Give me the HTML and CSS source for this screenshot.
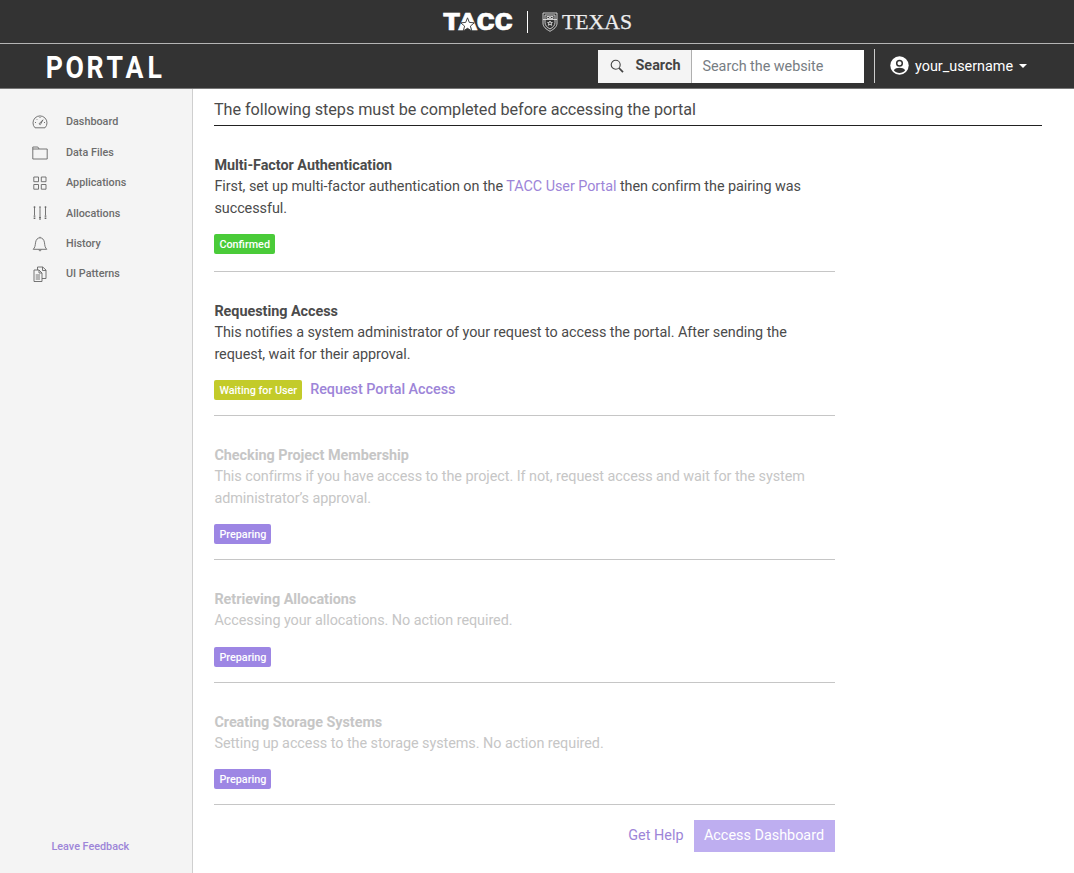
FILE: index.html
```html
<!DOCTYPE html>
<html lang="en">
<head>
<meta charset="utf-8">
<title>Portal</title>
<link rel="stylesheet" href="styles.css">
</head>
<body>
<header class="branding">
  <svg class="tacc" width="70" height="20" viewBox="0 0 70 20"><text x="0" y="18" textLength="69.500" lengthAdjust="spacingAndGlyphs">TACC</text><path class="star-edge" d="M24.500 5.800l1.800 4.600 5 .4-3.900 3.300 1.300 4.800-4.200-2.600-4.200 2.600 1.300-4.800-3.900-3.300 5-.4z"/></svg>
  <span class="divider"></span>
  <svg class="shield" width="16" height="20" viewBox="0 0 16 20"><path d="M1 1h14v10c0 4-3 6-7 8.3C4 17 1 15 1 11z"/><path d="M3 3h10v7.500c0 3.200-2 4.700-5 6.500-3-1.800-5-3.300-5-6.500zM1 7.500h14M5 4.500h2.500v2H5zM8.500 4.500H11v2H8.500zM8 9l.7 1.600h1.700l-1.300 1 .5 1.700L8 12.300l-1.600 1 .5-1.700-1.300-1h1.700z"/></svg>
  <svg class="texas" width="70" height="20" viewBox="0 0 70 20"><text x="0" y="17" textLength="70" lengthAdjust="spacingAndGlyphs">TEXAS</text></svg>
</header>
<nav class="topbar">
  <svg class="logo" width="120" height="30" viewBox="0 0 120 30"><text transform="scale(.86 1)" x="10.900 34.500 58.200 81 104 127.500" y="26.700">PORTAL</text></svg>
  <div class="search">
    <button class="search-button"><svg width="15" height="15" viewBox="0 0 15 15"><circle cx="5.700" cy="5.700" r="4.500"/><path d="M9 9l4 4.200" stroke-width="1.800"/></svg>Search</button>
    <div class="search-field">Search the website</div>
  </div>
  <div class="account">
    <svg width="19" height="19" viewBox="0 0 19 19"><circle cx="9.500" cy="9.500" r="9.200" fill="#fff"/><circle cx="9.500" cy="7.200" r="2.800" fill="#fff" stroke="#333" stroke-width="1.500"/><path d="M3.800 14.200c1.300-1.800 3.400-2.500 5.700-2.500s4.400.7 5.700 2.500c-1.400 1.700-3.500 2.700-5.700 2.700s-4.300-1-5.700-2.700z" fill="#333"/></svg>
    <span>your_username</span><i class="caret"></i>
  </div>
</nav>
<div class="page">
  <aside class="sidebar">
    <ul class="menu">
      <li><svg viewBox="0 0 16 16"><path d="M3 13.800A7 7 0 1 1 13 13.800zM7 9.800l4-4-2.700 4.800zM8 3v1M3 8.500h1M12 8.500h1M4.500 5l.7.7"/></svg>Dashboard</li>
      <li><svg viewBox="0 0 16 16"><path d="M.8 14V2h5l1.300 2h8.100v10zM.8 4h6.300"/></svg>Data Files</li>
      <li><svg viewBox="0 0 16 16"><path d="M1.800 2h4.700v4.700H1.800zM9.300 2H14v4.700H9.300zM1.800 9.500h4.700v4.700H1.800zM9.300 9.500H14v4.700H9.300z"/></svg>Applications</li>
      <li><svg viewBox="0 0 16 16"><path d="M2.500 1.500v9M8 5v9.500M13.500 1.500v9"/><path d="M2.500 1.500v1.500M8 12v2.500M13.500 1.500v1.500M2.500 10.500v4M13.500 10.500v4M8 1.500v3" stroke-width="1.700" stroke-dasharray="1.300 .8"/></svg>Allocations</li>
      <li><svg viewBox="0 0 16 16"><path d="M1.200 13.300c1.800-1.500 2-4 2.300-6.500C3.900 3.500 5.700 1.800 8 1.800s4.100 1.700 4.500 5c.3 2.500.5 5 2.300 6.500zM7 13.500c0 2 2 2 2 0M8 .8v1"/></svg>History</li>
      <li><svg viewBox="0 0 16 16"><path d="M2 4h5l3 3v8.500H2zM7 4v3h3M5.500 4V1h5.200L14 4v8.500h-4M10.500 1v3.500H14M3.700 9H8M3.700 11H8M3.700 13H8"/></svg>UI Patterns</li>
    </ul>
    <a class="feedback">Leave Feedback</a>
  </aside>
  <main class="content">
    <h1>The following steps must be completed before accessing the portal</h1>
    <div class="steps">
      <section class="step first">
        <h2>Multi-Factor Authentication</h2>
        <p>First, set up multi-factor authentication on the <a>TACC User Portal</a> then confirm the pairing was<br>successful.</p>
        <div class="status"><span class="badge confirmed">Confirmed</span></div>
      </section>
      <section class="step">
        <h2>Requesting Access</h2>
        <p>This notifies a system administrator of your request to access the portal. After sending the<br>request, wait for their approval.</p>
        <div class="status"><span class="badge waiting">Waiting for User</span><a class="action">Request Portal Access</a></div>
      </section>
      <section class="step pending">
        <h2>Checking Project Membership</h2>
        <p>This confirms if you have access to the project. If not, request access and wait for the system<br>administrator’s approval.</p>
        <div class="status"><span class="badge">Preparing</span></div>
      </section>
      <section class="step pending">
        <h2>Retrieving Allocations</h2>
        <p>Accessing your allocations. No action required.</p>
        <div class="status"><span class="badge">Preparing</span></div>
      </section>
      <section class="step pending">
        <h2>Creating Storage Systems</h2>
        <p>Setting up access to the storage systems. No action required.</p>
        <div class="status"><span class="badge">Preparing</span></div>
      </section>
      <div class="actions"><a>Get Help</a><button class="primary">Access Dashboard</button></div>
    </div>
  </main>
</div>
</body>
</html>
```
FILE: styles.css
```css
* { box-sizing: border-box; }
body { margin: 0; height: 873px; display: flex; flex-direction: column; overflow: hidden; background: #fff; color: #4b4b4b; font-family: Roboto, sans-serif; font-size: 14.4px; line-height: 21.6px; }
h1, h2, p, ul { margin: 0; padding: 0; }
button { border: 0; padding: 0; font: inherit; }
a { color: #9d85d8; white-space: nowrap; }
svg { overflow: visible; }

.branding { flex: none; height: 44px; padding-left: 443px; display: flex; align-items: center; background: #333; border-bottom: 1px solid #b5b5b5; }
.tacc text { font: 900 24px Roboto, sans-serif; fill: #fff; stroke: #fff; stroke-width: .6; }
.star-edge { fill: #fff; stroke: #333; stroke-width: .9; }
.divider { width: 1px; height: 22px; margin: 0 14px; background: #fff; }
.shield { fill: none; stroke: #ddd; stroke-width: .9; }
.texas { margin-left: 4px; }
.texas text { font: 22px "Liberation Serif", serif; fill: #eee; stroke: #eee; stroke-width: .25; }

.topbar { flex: none; height: 45px; display: flex; align-items: center; background: #333; border-bottom: 1px solid #777; color: #fff; }
.logo { margin-left: 45px; }
.logo text { font: 700 31px Roboto, sans-serif; fill: #fff; text-anchor: middle; }
.search { width: 266px; height: 33px; margin-left: 432.500px; display: flex; background: #fff; font-size: 14.4px; }
.search-button { width: 94px; padding: 0 0 0 12px; display: flex; align-items: center; gap: 11px; background: #f4f4f4; border-right: 1px solid #afafaf; color: #444; font-weight: 700; }
.search-button svg { fill: none; stroke: #444; stroke-width: 1.1; }
.search-field { padding: 6px 0 0 11px; color: #777d83; letter-spacing: -.03px; }
.account { height: 34px; margin-left: 10.500px; padding-left: 15px; display: flex; align-items: center; gap: 6px; border-left: 1px solid #ccc; font-size: 14.4px; }
.account svg { margin-top: -1px; }
.account span { padding-top: 2px; }
.caret { border: 4.500px solid transparent; border-top-color: #fff; border-bottom: 0; }

.page { flex: 1; display: flex; }
.sidebar { width: 193px; display: flex; flex-direction: column; justify-content: space-between; background: #f4f4f4; border-right: 1px solid #cfcfcf; padding: 18px 0 15px; color: #6d6d6d; font-size: 10.8px; font-weight: 500; }
.menu { list-style: none; }
.menu li { height: 30.4px; padding-left: 32px; display: flex; align-items: center; gap: 18px; }
.menu svg { width: 16px; height: 16px; fill: none; stroke: #666; stroke-width: .9; }
.feedback { padding-left: 51.500px; }

.content { width: 850px; padding: 9px 0 0 21px; }
h1 { width: 828px; height: 28px; border-bottom: 1px solid #222; font-size: 16.200px; letter-spacing: -.04px; font-weight: 400; line-height: 24px; white-space: nowrap; }
.steps { width: 620.500px; padding-left: .4px; }
.step { height: 144px; padding-top: 29px; border-bottom: 1px solid #c6c6c6; }
.step.first { height: 146px; }
.step h2 { font-size: 14.4px; line-height: 21.6px; font-weight: 700; letter-spacing: -.03px; }
.step p { margin-top: -.5px; white-space: nowrap; letter-spacing: -.05px; }
.status { margin-top: 14.500px; display: flex; align-items: center; gap: 8px; height: 21px; }
.badge { height: 20px; padding: 0 5px; border-radius: 2px; background: #9d86e4; color: #fff; font-size: 10.8px; line-height: 21px; font-weight: 500; }
.confirmed { background: #4acb39; }
.waiting { background: #c3cb2a; }
.action { font-weight: 500; letter-spacing: -.03px; }
.pending { color: #c6c6c6; }
.pending:nth-child(n+4) { height: 122.500px; }
.actions { display: flex; justify-content: flex-end; align-items: center; gap: 10px; margin-top: 15px; }
.actions a { padding-bottom: 1px; }
.primary { width: 141px; height: 32px; background: #beaef0; color: #fff; }
```
